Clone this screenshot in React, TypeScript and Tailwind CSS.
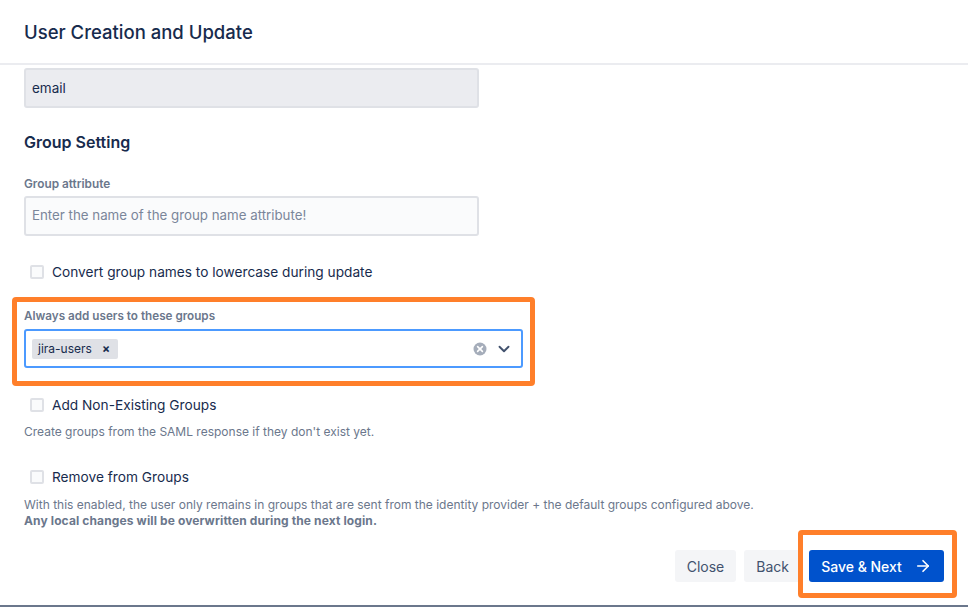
import { ArrowRight, ChevronDown } from "lucide-react";

function Checkbox({ label }: { label: string }) {
  return (
    <label className="flex h-5 items-center pl-[6px]">
      <span className="h-[14px] w-[14px] rounded-[2px] border-2 border-[#dfe1e6] bg-[#fafbfc]" />
      <span className="ml-[8px] text-[13.7px] text-[#172b4d]">{label}</span>
    </label>
  );
}

export default function App() {
  return (
    <div
      className="flex h-[607px] w-[968px] flex-col overflow-hidden border-b-2 border-[#6b778c] bg-white"
      style={{ fontFamily: 'Inter, "Liberation Sans", Arial, sans-serif' }}
    >
      <header className="flex h-[65px] shrink-0 items-center border-b-2 border-[#ebecf0] px-6 pt-[3px]">
        <h1 className="text-[18.5px] font-medium text-[#172b4d]">User Creation and Update</h1>
      </header>

      <div className="flex flex-1 flex-col px-6 pt-[3px]">
        <div className="flex h-10 w-[455px] items-center rounded-[3px] border-2 border-[#dfe1e6] bg-[#ebecf0] px-[6px] text-[13.5px] text-[#172b4d]">
          email
        </div>

        <h2 className="mt-6 text-[16px] leading-5 font-semibold text-[#172b4d]">Group Setting</h2>

        <p className="mt-6 text-[11.8px] leading-4 font-semibold text-[#6b778c]">Group attribute</p>
        <div className="mt-1 flex h-10 w-[455px] items-center rounded-[3px] border-2 border-[#dfe1e6] bg-[#fafbfc] px-[6px] text-[13.3px] text-[#7a869a]">
          Enter the name of the group name attribute!
        </div>

        <div className="mt-[26px]">
          <Checkbox label="Convert group names to lowercase during update" />
        </div>

        <div className="relative mt-[26px]">
          <p className="text-[11.7px] leading-4 font-semibold text-[#6b778c]">Always add users to these groups</p>
          <div className="mt-[5px] flex h-[39px] w-[499px] items-center rounded-[3px] border-2 border-[#4c9aff] bg-white pr-[8px] pl-[6px]">
            <span className="flex h-5 items-center rounded-[2px] bg-[#dfe1e6] pr-[8px] pl-[6px] text-[12px] text-[#172b4d]">
              jira-users
              <span className="ml-[10px] text-[12px] leading-none font-bold">×</span>
            </span>
            <span className="flex-1" />
            <svg width="14" height="14" viewBox="0 0 14 14" className="mr-[8px]">
              <circle cx="7" cy="7" r="6.5" fill="#a5adba" />
              <path d="M4.6 4.6 9.4 9.4M9.4 4.6 4.6 9.4" stroke="#fff" strokeWidth="1.6" strokeLinecap="round" />
            </svg>
            <ChevronDown size={18} strokeWidth={2.5} className="text-[#42526e]" />
          </div>
          <div className="pointer-events-none absolute top-[-11px] left-[-12px] h-[89px] w-[523px] rounded-[4px] border-[5px] border-[#ff7f2a]" />
        </div>

        <div className="mt-[27px]">
          <Checkbox label="Add Non-Existing Groups" />
        </div>
        <p className="mt-[9px] text-[12px] leading-4 text-[#6b778c]">
          Create groups from the SAML response if they don't exist yet.
        </p>

        <div className="mt-[27px]">
          <Checkbox label="Remove from Groups" />
        </div>
        <p className="mt-[10px] text-[12px] leading-4 text-[#6b778c]">
          With this enabled, the user only remains in groups that are sent from the identity provider + the default groups configured above.
          <br />
          <b className="tracking-[0.01em]">Any local changes will be overwritten during the next login.</b>
        </p>

        <div className="mt-[21px] flex justify-end gap-2">
          <button className="h-8 rounded-[3px] bg-[#f4f5f7] px-3 text-[14px] text-[#42526e]">Close</button>
          <button className="h-8 rounded-[3px] bg-[#f4f5f7] px-3 text-[14px] text-[#42526e]">Back</button>
          <div className="relative">
            <button className="flex h-8 w-[135px] items-center justify-center gap-[12px] rounded-[3px] bg-[#0052cc] text-[14px] font-medium text-white">
              Save &amp; Next
              <ArrowRight size={18} strokeWidth={2.2} />
            </button>
            <div className="pointer-events-none absolute top-[-20px] right-[-13px] bottom-[-16px] left-[-11px] rounded-[4px] border-[5px] border-[#ff7f2a]" />
          </div>
        </div>
      </div>
    </div>
  );
}
